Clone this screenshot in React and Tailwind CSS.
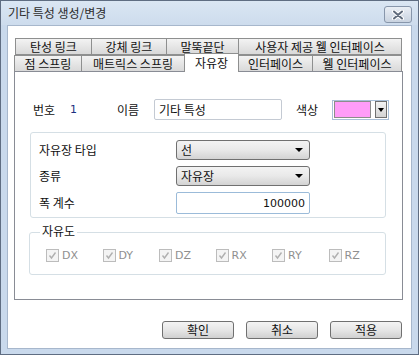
const kr = { fontFamily: '"Noto Sans CJK KR", "Noto Sans", sans-serif' };
const latin = { fontFamily: '"DejaVu Sans", "Liberation Sans", sans-serif' };

const Tab = ({ label, width, selected }) => (
  <div
    className={`-ml-px flex items-center justify-center border border-[#8e8f8f] text-[12px] leading-none text-[#111] ${
      selected
        ? "relative z-10 -mt-[2px] h-[19px] border-b-0 bg-white"
        : "h-[17px] bg-gradient-to-b from-[#f3f3f3] to-[#d9d9d9]"
    }`}
    style={{ ...kr, width }}
  >
    {label}
  </div>
);

const Combo = ({ value, className = "" }) => (
  <div
    className={`flex h-[20px] w-[134px] items-center justify-between rounded-[3px] border border-[#707070] bg-gradient-to-b from-[#f3f3f3] via-[#e9e9e9] to-[#d3d3d3] pl-[4px] pr-[6px] text-[12px] leading-none text-[#111] ${className}`}
    style={kr}
  >
    <span>{value}</span>
    <span className="h-0 w-0 border-x-[4px] border-t-[4px] border-x-transparent border-t-black" />
  </div>
);

const Check = ({ label }) => (
  <div className="flex w-[57px] items-center gap-[3px]">
    <div className="flex h-[13px] w-[13px] items-center justify-center border border-[#bcbcbc] bg-[#f4f4f4]">
      <svg width="9" height="9" viewBox="0 0 9 9">
        <path d="M1.5 4.5 L3.5 7 L7.5 1.5" fill="none" stroke="#b0b0b0" strokeWidth="1.4" />
      </svg>
    </div>
    <span className="text-[11px] leading-none text-[#8f8f8f]" style={latin}>
      {label}
    </span>
  </div>
);

const Button = ({ label, className = "" }) => (
  <button
    className={`flex h-[18px] w-[72px] items-center justify-center rounded-[3px] border border-[#707070] bg-gradient-to-b from-[#f4f4f4] via-[#e6e6e6] to-[#d0d0d0] text-[12px] leading-none text-[#111] ${className}`}
    style={kr}
  >
    {label}
  </button>
);

export default function App() {
  return (
    <div className="flex h-[355px] w-[419px] flex-col border border-[#5f6d82] bg-[#c9d9ec]">
      {/* title bar */}
      <div className="flex h-[24px] shrink-0 items-center justify-between bg-gradient-to-b from-[#dae6f3] to-[#cddced] pl-[7px] pr-[6px]">
        <span className="text-[12px] leading-none text-[#2b2b2b]" style={kr}>
          기타 특성 생성/변경
        </span>
        <div className="mt-[3px] flex h-[17px] w-[28px] items-center justify-center rounded-[3px] border border-[#8796ab] bg-gradient-to-b from-[#e9eef5] to-[#c9d3e0]">
          <svg width="12" height="10" viewBox="0 0 12 10">
            <path d="M2 1.5 L10 8.5 M10 1.5 L2 8.5" stroke="#ffffff" strokeWidth="4" strokeLinecap="round" />
            <path d="M2 1.5 L10 8.5 M10 1.5 L2 8.5" stroke="#5f6b7c" strokeWidth="2" strokeLinecap="round" />
          </svg>
        </div>
      </div>

      {/* body */}
      <div className="mx-[6px] mb-[5px] flex flex-1 flex-col border border-[#a7b7cc] bg-white pl-[6px] pt-[12px]">
        {/* tabs */}
        <div className="flex w-[389px] flex-col">
          <div className="ml-[2px] flex">
            <Tab label="탄성 링크" width={77} />
            <Tab label="강체 링크" width={76} />
            <Tab label="말뚝끝단" width={73} />
            <Tab label="사용자 제공 웰 인터페이스" width={164} />
          </div>
          <div className="ml-px flex">
            <Tab label="점 스프링" width={68} />
            <Tab label="매트릭스 스프링" width={104} />
            <Tab label="자유장" width={55} selected />
            <Tab label="인터페이스" width={75} />
            <Tab label="웰 인터페이스" width={90} />
          </div>

          {/* panel */}
          <div className="-mt-px flex h-[229px] flex-col border border-[#898c95] bg-white">
            {/* name row */}
            <div className="mt-[27px] flex h-[21px] items-center text-[12px] leading-none text-[#111]" style={kr}>
              <span className="ml-[18px] w-[37px]">번호</span>
              <span className="w-[47px] text-[11px] text-[#1d2f80]" style={latin}>
                1
              </span>
              <span className="w-[37px]">이름</span>
              <div className="flex h-[21px] w-[128px] items-center rounded-[2px] border border-[#c4cad3] pl-[4px]">
                기타 특성
              </div>
              <span className="ml-[14px] w-[36px]">색상</span>
              <div className="flex h-[20px] w-[57px] items-center gap-[4px] border border-[#a9bfd8] px-px">
                <div className="h-[17px] w-[37px] border border-[#8c8c8c] bg-[#ff9cf8]" />
                <div className="flex h-[17px] w-[12px] items-center justify-center border border-[#707070] bg-gradient-to-b from-[#f3f3f3] to-[#d3d3d3]">
                  <span className="h-0 w-0 border-x-[3.5px] border-t-[4px] border-x-transparent border-t-black" />
                </div>
              </div>
            </div>

            {/* group 1 */}
            <div className="ml-[15px] mt-[12px] flex h-[86px] w-[356px] flex-col gap-[6px] rounded-[3px] border border-[#d5dfe5] pl-[8px] pt-[7px] text-[12px] leading-none text-[#111]" style={kr}>
              <div className="flex items-center">
                <span className="w-[137px]">자유장 타입</span>
                <Combo value="선" />
              </div>
              <div className="flex items-center">
                <span className="w-[137px]">종류</span>
                <Combo value="자유장" />
              </div>
              <div className="flex items-center">
                <span className="w-[137px]">폭 계수</span>
                <div className="flex h-[22px] w-[134px] items-center justify-end rounded-[2px] border border-[#9bbbd9] pr-[4px] text-[11px]" style={latin}>
                  100000
                </div>
              </div>
            </div>

            {/* group 2 */}
            <div className="relative ml-[14px] mt-[14px] flex h-[43px] w-[357px] items-center rounded-[3px] border border-[#d5dfe5] pl-[16px] pt-[4px]">
              <span className="absolute -top-[8px] left-[10px] bg-white px-[2px] text-[12px] leading-none text-[#111]" style={kr}>
                자유도
              </span>
              <Check label="DX" />
              <Check label="DY" />
              <Check label="DZ" />
              <Check label="RX" />
              <Check label="RY" />
              <Check label="RZ" />
            </div>
          </div>
        </div>

        {/* buttons */}
        <div className="mt-[21px] flex w-[389px] justify-end gap-[12px] pr-px">
          <Button label="확인" />
          <Button label="취소" />
          <Button label="적용" />
        </div>
      </div>
    </div>
  );
}
